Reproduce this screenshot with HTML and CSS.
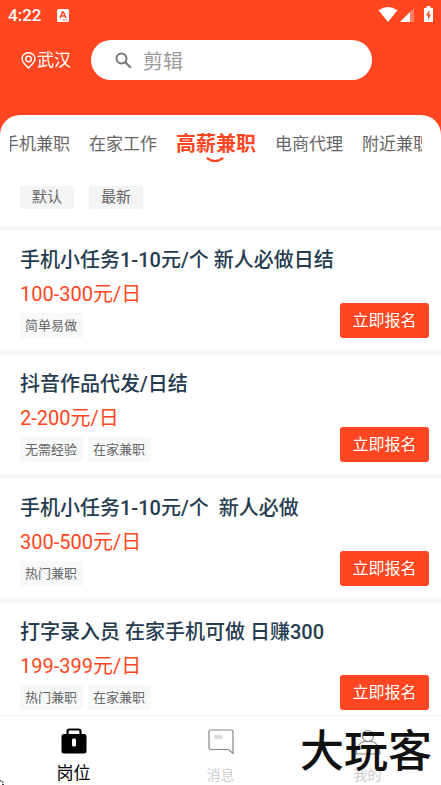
FILE: index.html
```
<!DOCTYPE html>
<html lang="zh-CN">
<head>
<meta charset="utf-8">
<meta name="viewport" content="width=device-width, initial-scale=1">
<title>高薪兼职</title>
<link rel="stylesheet" href="styles.css">
</head>
<body>
<div class="app">
  <header class="header">
    <div class="status">
      <span class="clock">4:22</span>
      <svg class="status-app" width="12" height="13" viewBox="0 0 12 13"><rect width="12" height="13" rx="1.5" fill="#fff"/><path d="M3 9 5.600 3h.8L9 9M4 7h4" fill="none" stroke="#ff4621" stroke-width="1.500"/><path d="M6 11h2M9 11h1" stroke="#ff4621"/></svg>
      <svg width="20" height="16" viewBox="0 0 20 16"><path d="M.5 4.200Q10-2.200 19.500 4.200L10 16Z" fill="#fff"/></svg>
      <svg class="signal" width="14" height="14" viewBox="0 0 14 14"><path d="M14 0v14H0Z" fill="#ff7d61"/><path d="M10 4v10H0Z" fill="#fff"/></svg>
      <svg width="9" height="16" viewBox="0 0 9 16"><path d="M2.500 0h4v2H9v14H0V2h2.500Z" fill="#fff"/><path d="M5.500 4 2 9.500h2V14l3-5.500H5Z" fill="#ff4621"/></svg>
    </div>
    <div class="search-row">
      <a class="city" href="#city">
        <svg width="15" height="17" viewBox="0 0 15 17" fill="none" stroke="#fff" stroke-width="1.400"><path d="M7.500 16C4.500 13 1 10 1 7a6.500 6.200 0 0 1 13 0c0 3-3.500 6-6.500 9Z"/><circle cx="7.500" cy="7" r="2.800"/></svg>
        <span>武汉</span>
      </a>
      <label class="search">
        <svg width="17" height="17" viewBox="0 0 17 17" fill="none" stroke="#757575" stroke-width="2"><circle cx="6.500" cy="6.500" r="5"/><path d="m10.300 10.300 5.500 5.500"/></svg>
        <input type="search" placeholder="剪辑" aria-label="搜索">
      </label>
    </div>
  </header>

  <main class="content">
    <nav class="tabs">
      <a href="#t1">手机兼职</a>
      <a href="#t2">在家工作</a>
      <a class="active" href="#t3">高薪兼职
        <svg class="smile" width="18" height="6" viewBox="0 0 18 6"><path d="M1.500 1.500Q9 6.500 16.500 1.500" fill="none" stroke="#ff4621" stroke-width="2.200" stroke-linecap="round"/></svg>
      </a>
      <a href="#t4">电商代理</a>
      <a href="#t5">附近兼职</a>
    </nav>
    <div class="sort">
      <button type="button">默认</button>
      <button type="button">最新</button>
    </div>
    <article class="job">
      <h2>手机小任务1-10元/个 新人必做日结</h2>
      <p class="pay">100-300元/日</p>
      <div class="foot"><span class="tag">简单易做</span><button class="apply" type="button">立即报名</button></div>
    </article>
    <article class="job">
      <h2>抖音作品代发/日结</h2>
      <p class="pay">2-200元/日</p>
      <div class="foot"><span class="tag">无需经验</span><span class="tag">在家兼职</span><button class="apply" type="button">立即报名</button></div>
    </article>
    <article class="job">
      <h2>手机小任务1-10元/个&nbsp; 新人必做</h2>
      <p class="pay">300-500元/日</p>
      <div class="foot"><span class="tag">热门兼职</span><button class="apply" type="button">立即报名</button></div>
    </article>
    <article class="job">
      <h2>打字录入员 在家手机可做 日赚300</h2>
      <p class="pay">199-399元/日</p>
      <div class="foot"><span class="tag">热门兼职</span><span class="tag">在家兼职</span><button class="apply" type="button">立即报名</button></div>
    </article>
  </main>

  <nav class="bottom">
    <a class="current" href="#jobs">
      <svg width="26" height="26" viewBox="0 0 26 26"><path d="M6.500 7V3.500a2 2 0 0 1 2-2h9a2 2 0 0 1 2 2V7" fill="none" stroke="#000" stroke-width="2.200"/><rect x=".5" y="6" width="25" height="19.500" rx="2.500"/><path d="M8 4.500h10" stroke="#fff" stroke-width="2.500"/><rect x="11" y="10.500" width="4" height="8" rx="1.500" fill="#fff"/></svg>
      <span>岗位</span>
    </a>
    <a href="#messages">
      <svg width="26" height="26" viewBox="0 0 26 26"><path d="M2.500 1h21a1.500 1.500 0 0 1 1.500 1.500V24.500L20.500 20.500H2.500A1.500 1.500 0 0 1 1 19V2.500A1.500 1.500 0 0 1 2.500 1Z" fill="none" stroke="#858585" stroke-width="1.200"/><rect x="6" y="6" width="9" height="4" rx="1.500" fill="#ddd"/></svg>
      <span>消息</span>
    </a>
    <a href="#me">
      <svg width="26" height="26" viewBox="0 0 26 26" fill="none" stroke="#858585" stroke-width="1.200"><circle cx="13" cy="7" r="5.500"/><path d="M1 25Q2 14 9 12.500h8Q24 14 25 25Z"/></svg>
      <span>我的</span>
    </a>
    <div class="watermark">大玩客</div>
    <svg class="corner" width="5" height="5" viewBox="0 0 5 5"><path d="M0 1h1.500M2 2h1.500M2 4l2 1" stroke="#000"/></svg>
  </nav>
</div>
</body>
</html>
```
FILE: styles.css
```
* { box-sizing: border-box; }
body {
  margin: 0;
  font-family: Roboto, "Noto Sans CJK SC", sans-serif;
  color: #666;
  background: #ff4621;
}
a { color: inherit; text-decoration: none; }
button { border: 0; padding: 0; font-family: inherit; }
svg { display: block; flex: none; }
.app { height: 100vh; display: flex; flex-direction: column; overflow: hidden; }

.header { flex: none; color: #fff; padding-bottom: 35px; }
.status { display: flex; align-items: center; height: 28px; padding: 0 8px; }
.clock { font-size: 17px; font-weight: 500; line-height: 28px; padding-top: 2px; }
.status-app { margin: 2px auto 0 16px; }
.signal { margin: 2px 10px 0 2px; }
.search-row { display: flex; align-items: center; gap: 20px; padding: 12px 69px 0 21px; }
.city { display: flex; align-items: center; gap: 1px; font-size: 17px; line-height: 24px; white-space: nowrap; }
.search { flex: 1; min-width: 0; display: flex; align-items: center; gap: 11px; height: 40px; padding: 0 24px; border-radius: 20px; background: #fff; }
.search input { flex: 1; min-width: 0; border: 0; outline: 0; padding: 4px 0 0; background: none; font: inherit; font-size: 20px; color: #333; }
.search input::placeholder { color: #999; opacity: 1; }

.content { flex: 1; min-height: 0; overflow: hidden; background: #fff; border-radius: 20px 20px 0 0; }
.tabs { display: flex; justify-content: center; align-items: center; gap: 19px; margin: 10px 19px 0 10px; height: 38px; overflow: hidden; font-size: 17px; line-height: 38px; white-space: nowrap; }
.tabs a { flex: none; }
.tabs .active { position: relative; color: #ff4621; font-size: 20px; font-weight: 700; }
.smile { position: absolute; left: 50%; bottom: 0; margin-left: -10px; }
.sort { display: flex; gap: 15px; padding: 23px 20px 17px; }
.sort button { width: 54px; height: 23px; border-radius: 2px; background: #f3f5f5; color: #666; font-size: 15px; line-height: 23px; }

.job { height: 124px; padding: 15px 12px 12px 20px; border-top: 5px solid #f7f7f7; }
.job:last-child { height: auto; }
.job h2 { margin: 0; color: #253b50; font-size: 20px; font-weight: 500; line-height: 28px; white-space: nowrap; }
.pay { margin: 6px 0 0; color: #ff4621; font-size: 20px; line-height: 28px; }
.foot { display: flex; align-items: flex-end; gap: 5px; margin-top: -5px; height: 35px; }
.tag { padding: 0 6px 0 5px; border-radius: 2px; background: #f7f9f9; font-size: 13px; line-height: 25px; }
.apply { width: 89px; height: 35px; margin-left: auto; border-radius: 3px; background: #ff4621; color: #fff; font-size: 16px; line-height: 35px; }

.bottom { position: relative; flex: none; display: grid; grid-template-columns: repeat(3, 1fr); height: 70px; border-top: 1px solid #f4f4f4; background: #fff; }
.bottom a { display: flex; flex-direction: column; align-items: center; gap: 8px; padding-top: 13px; color: #ccc; font-size: 14px; line-height: 24px; }
.bottom .current { gap: 7px; padding-top: 12px; color: #000; font-size: 17px; }
.watermark { position: absolute; right: 9px; top: 8px; color: #111; font-size: 44px; font-weight: 500; line-height: 56px; pointer-events: none; }
.corner { position: absolute; left: 0; bottom: 0; }
```
